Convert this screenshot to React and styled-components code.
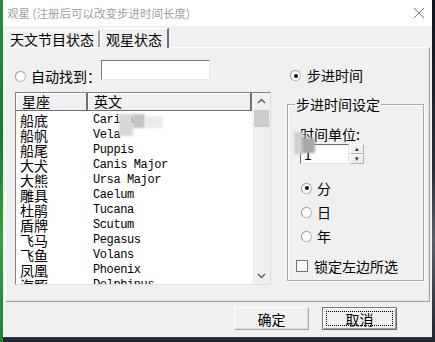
import React from "react";
import styled, { createGlobalStyle } from "styled-components";

const GlobalStyle = createGlobalStyle`
  html, body {
    margin: 0;
    padding: 0;
    background: #1c1f26;
  }
  body {
    font-family: "Noto Sans CJK SC", "Liberation Sans", sans-serif;
  }
`;

const Screen = styled.div`
  width: 435px;
  height: 342px;
  display: flex;
  overflow: hidden;
  background: #222831;
`;

const GreenEdge = styled.div`
  width: 3px;
  background: linear-gradient(180deg, #2e8b3a, #1f7a2d 40%, #3aa046 70%, #22802f);
`;

const DarkEdge = styled.div`
  width: 3px;
  background: linear-gradient(180deg, #10131a, #2a2f3a 50%, #5b606a 70%, #20242c);
`;

const Window = styled.div`
  width: 429px;
  height: 338px;
  display: flex;
  flex-direction: column;
  background: #f0f0f0;
  border-bottom: 1px solid #3a3a3a;
  box-sizing: border-box;
`;

const TitleBar = styled.div`
  height: 26px;
  background: #ffffff;
  display: flex;
  align-items: center;
  justify-content: space-between;
  padding: 0 7px 0 4px;
  font-size: 11.5px;
  color: #a0a0a0;
`;

const CloseIcon = styled.svg`
  width: 12px;
  height: 12px;
`;

const Body = styled.div`
  flex: 1;
  display: flex;
  flex-direction: column;
  padding: 1px 2px 0 2px;
`;

const TabStrip = styled.div`
  height: 20px;
  display: flex;
  align-items: flex-end;
  position: relative;
  z-index: 1;
`;

const Tab = styled.div`
  height: ${(p) => (p.$active ? "20px" : "17px")};
  margin-bottom: ${(p) => (p.$active ? "-1px" : "0")};
  padding: 0 ${(p) => (p.$active ? "5px" : "4px")};
  display: flex;
  align-items: center;
  font-size: 14px;
  color: #000;
  background: #f0f0f0;
  border-top: 1px solid #ffffff;
  border-left: 1px solid #ffffff;
  border-right: 2px solid ${(p) => (p.$active ? "#6e6e6e" : "#a0a0a0")};
  box-sizing: border-box;
`;

const TabPage = styled.div`
  height: 255px;
  border: 1px solid #a0a0a0;
  border-top-color: #ffffff;
  border-left-color: #ffffff;
  box-shadow: inset -1px -1px 0 #e3e3e3;
  display: flex;
  padding: 13px 6px 0 9px;
  gap: 16px;
  box-sizing: border-box;
`;

const LeftCol = styled.div`
  width: 256px;
  display: flex;
  flex-direction: column;
`;

const SearchRow = styled.div`
  display: flex;
  align-items: flex-end;
  height: 20px;
  margin-top: 3px;
  margin-bottom: 8px;
`;

const RadioCircle = styled.span`
  width: 11px;
  height: 11px;
  border-radius: 50%;
  border: 1px solid #b8b8b8;
  border-top-color: #9a9a9a;
  border-left-color: #9a9a9a;
  background: #ffffff;
  box-sizing: border-box;
  display: inline-flex;
  align-items: center;
  justify-content: center;
  flex-shrink: 0;
  margin-bottom: ${(p) => p.$drop || 0}px;

  &::after {
    content: "";
    width: 4px;
    height: 4px;
    border-radius: 50%;
    background: ${(p) => (p.$checked ? "#111" : "transparent")};
  }
`;

const Label = styled.span`
  font-size: 14px;
  color: #000;
  margin-left: ${(p) => p.$gap || 5}px;
  line-height: 16px;
`;

const TextBox = styled.div`
  width: 109px;
  height: 20px;
  background: #fff;
  border: 1px solid #7a7a7a;
  border-right-color: #e8e8e8;
  border-bottom-color: #e8e8e8;
  box-sizing: border-box;
  margin-bottom: 4px;
`;

const ListBox = styled.div`
  width: 256px;
  height: 193px;
  border: 1px solid #828282;
  border-right-color: #e0e0e0;
  border-bottom-color: #e0e0e0;
  background: #fff;
  display: flex;
  box-sizing: border-box;
  position: relative;
  overflow: hidden;
`;

const ListMain = styled.div`
  flex: 1;
  display: flex;
  flex-direction: column;
  overflow: hidden;
`;

const HeaderRow = styled.div`
  display: flex;
  height: 18px;
  flex-shrink: 0;
  margin-bottom: 2px;
`;

const HeaderCell = styled.div`
  width: ${(p) => (p.$w ? `${p.$w}px` : "auto")};
  flex: ${(p) => (p.$w ? "none" : 1)};
  background: #f0f0f0;
  border-right: 2px solid #707070;
  border-bottom: 1px solid #707070;
  box-shadow: inset 1px 1px 0 #fff;
  font-size: 14px;
  line-height: 17px;
  padding-left: 6px;
  box-sizing: border-box;
`;

const Row = styled.div`
  display: flex;
  height: 15px;
  align-items: center;
  flex-shrink: 0;
`;

const NameCell = styled.div`
  width: 73px;
  padding-left: 4px;
  font-size: 14px;
  line-height: 15px;
  color: #000;
`;

const LatinCell = styled.div`
  font-family: "Liberation Mono", "DejaVu Sans Mono", monospace;
  font-size: 12px;
  letter-spacing: -0.4px;
  line-height: 15px;
  color: #000;
`;

const ScrollBar = styled.div`
  width: 17px;
  background: #f0f0f0;
  display: flex;
  flex-direction: column;
  align-items: center;
  border-left: 1px solid #f7f7f7;
`;

const ArrowBtn = styled.svg`
  width: 17px;
  height: 17px;
  flex-shrink: 0;
`;

const Thumb = styled.div`
  width: 15px;
  height: 17px;
  background: #cdcdcd;
`;

const Track = styled.div`
  flex: 1;
`;

const Blur = styled.div`
  position: absolute;
  left: ${(p) => p.$x}px;
  top: ${(p) => p.$y}px;
  width: ${(p) => p.$w}px;
  height: ${(p) => p.$h}px;
  background: ${(p) => p.$bg};
  filter: blur(1px);
`;

const RightCol = styled.div`
  flex: 1;
  display: flex;
  flex-direction: column;
`;

const StepRow = styled.div`
  display: flex;
  align-items: flex-end;
  height: 20px;
  margin-left: 3px;
  margin-top: 2px;
  margin-bottom: 13px;
`;

const GroupBox = styled.fieldset`
  margin: 0;
  padding: 0 0 0 12px;
  width: 137px;
  height: 185px;
  border: 1px solid #a8a8a8;
  box-shadow: 1px 1px 0 #fff, inset 1px 1px 0 #fff;
  box-sizing: border-box;
  display: flex;
  flex-direction: column;
  position: relative;

  legend {
    font-size: 14px;
    padding: 0 1px;
    margin-left: -5px;
    line-height: 16px;
  }
`;

const UnitLabel = styled.div`
  font-size: 14px;
  margin-top: 14px;
  line-height: 16px;
`;

const SpinRow = styled.div`
  display: flex;
  margin-top: 2px;
`;

const SpinInput = styled.div`
  width: 49px;
  height: 20px;
  background: #fff;
  border: 1px solid #6a6a6a;
  border-right-color: #e8e8e8;
  border-bottom-color: #e8e8e8;
  box-sizing: border-box;
  font-size: 14px;
  line-height: 18px;
  padding-left: 3px;
`;

const SpinButtons = styled.div`
  display: flex;
  flex-direction: column;
  width: 14px;
  height: 20px;
  margin-left: 1px;
`;

const SpinBtn = styled.div`
  flex: 1;
  border: 1px solid #b0b0b0;
  border-top-color: #fff;
  border-left-color: #fff;
  background: #f0f0f0;
  font-size: 7px;
  line-height: 7px;
  text-align: center;
  color: #333;
  box-sizing: border-box;
`;

const UnitList = styled.div`
  display: flex;
  flex-direction: column;
  gap: 8px;
  margin-top: 16px;
  margin-left: 1px;
`;

const UnitRow = styled.div`
  display: flex;
  align-items: center;
  height: 16px;
`;

const CheckRow = styled.div`
  display: flex;
  align-items: center;
  margin-top: 14px;
  margin-left: -4px;
`;

const CheckBox = styled.span`
  width: 12px;
  height: 12px;
  border: 1px solid #707070;
  background: #fff;
  box-sizing: border-box;
`;

const Footer = styled.div`
  flex: 1;
  display: flex;
  justify-content: flex-end;
  align-items: flex-start;
  gap: 13px;
  padding: 5px 33px 0 0;
`;

const Button = styled.div`
  width: 75px;
  height: 23px;
  box-sizing: border-box;
  border: 1px solid ${(p) => (p.$default ? "#6a6a6a" : "#a8a8a8")};
  border-top-color: ${(p) => (p.$default ? "#7a7a7a" : "#ffffff")};
  border-left-color: ${(p) => (p.$default ? "#7a7a7a" : "#ffffff")};
  box-shadow: ${(p) =>
    p.$default
      ? "inset 1px 1px 0 #fff, inset -1px -1px 0 #a0a0a0"
      : "inset -1px -1px 0 #e0e0e0"};
  background: #f0f0f0;
  display: flex;
  align-items: center;
  justify-content: center;
  font-size: 14px;
  color: #000;
  position: relative;

  &::before {
    content: "";
    display: ${(p) => (p.$default ? "block" : "none")};
    position: absolute;
    inset: 3px;
    border: 1px dotted #000;
  }
`;

const stars = [
  ["船底", "Carina"],
  ["船帆", "Vela"],
  ["船尾", "Puppis"],
  ["大犬", "Canis Major"],
  ["大熊", "Ursa Major"],
  ["雕具", "Caelum"],
  ["杜鹃", "Tucana"],
  ["盾牌", "Scutum"],
  ["飞马", "Pegasus"],
  ["飞鱼", "Volans"],
  ["凤凰", "Phoenix"],
  ["海豚", "Delphinus"],
];

const App = () => {
  return (
    <>
      <GlobalStyle />
      <Screen>
        <GreenEdge />
        <Window>
          <TitleBar>
            <span>观星 (注册后可以改变步进时间长度)</span>
            <CloseIcon viewBox="0 0 12 12">
              <path d="M1 1 L11 11 M11 1 L1 11" stroke="#7a7a7a" strokeWidth="1" />
            </CloseIcon>
          </TitleBar>
          <Body>
            <TabStrip>
              <Tab>天文节目状态</Tab>
              <Tab $active>观星状态</Tab>
            </TabStrip>
            <TabPage>
              <LeftCol>
                <SearchRow>
                  <RadioCircle $drop={2} />
                  <Label>自动找到：</Label>
                  <TextBox />
                </SearchRow>
                <ListBox>
                  <ListMain>
                    <HeaderRow>
                      <HeaderCell $w={72}>星座</HeaderCell>
                      <HeaderCell>英文</HeaderCell>
                    </HeaderRow>
                    {stars.map(([cn, en]) => (
                      <Row key={cn}>
                        <NameCell>{cn}</NameCell>
                        <LatinCell>{en}</LatinCell>
                      </Row>
                    ))}
                  </ListMain>
                  <ScrollBar>
                    <ArrowBtn viewBox="0 0 17 17">
                      <path d="M5 10 L8.5 6.5 L12 10" fill="none" stroke="#606060" strokeWidth="1.5" />
                    </ArrowBtn>
                    <Thumb />
                    <Track />
                    <ArrowBtn viewBox="0 0 17 17">
                      <path d="M5 7 L8.5 10.5 L12 7" fill="none" stroke="#606060" strokeWidth="1.5" />
                    </ArrowBtn>
                  </ScrollBar>
                  <Blur $x={103} $y={21} $w={14} $h={22} $bg="#d8d8d8" />
                  <Blur $x={117} $y={21} $w={12} $h={14} $bg="#c4c4c4" />
                  <Blur $x={129} $y={23} $w={18} $h={12} $bg="#ececec" />
                </ListBox>
              </LeftCol>
              <RightCol>
                <StepRow>
                  <RadioCircle $checked $drop={2} />
                  <Label $gap={6}>步进时间</Label>
                </StepRow>
                <GroupBox>
                  <legend>步进时间设定</legend>
                  <UnitLabel>时间单位:</UnitLabel>
                  <SpinRow>
                    <SpinInput>1</SpinInput>
                    <SpinButtons>
                      <SpinBtn>▴</SpinBtn>
                      <SpinBtn>▾</SpinBtn>
                    </SpinButtons>
                  </SpinRow>
                  <UnitList>
                    <UnitRow>
                      <RadioCircle $checked />
                      <Label>分</Label>
                    </UnitRow>
                    <UnitRow>
                      <RadioCircle />
                      <Label>日</Label>
                    </UnitRow>
                    <UnitRow>
                      <RadioCircle />
                      <Label>年</Label>
                    </UnitRow>
                  </UnitList>
                  <CheckRow>
                    <CheckBox />
                    <Label $gap={6}>锁定左边所选</Label>
                  </CheckRow>
                  <Blur $x={6} $y={20} $w={10} $h={22} $bg="#cfcfcf" />
                  <Blur $x={14} $y={26} $w={13} $h={15} $bg="#a9a9a9" />
                </GroupBox>
              </RightCol>
            </TabPage>
            <Footer>
              <Button>确定</Button>
              <Button $default>取消</Button>
            </Footer>
          </Body>
        </Window>
        <DarkEdge />
      </Screen>
    </>
  );
};

export default App;
